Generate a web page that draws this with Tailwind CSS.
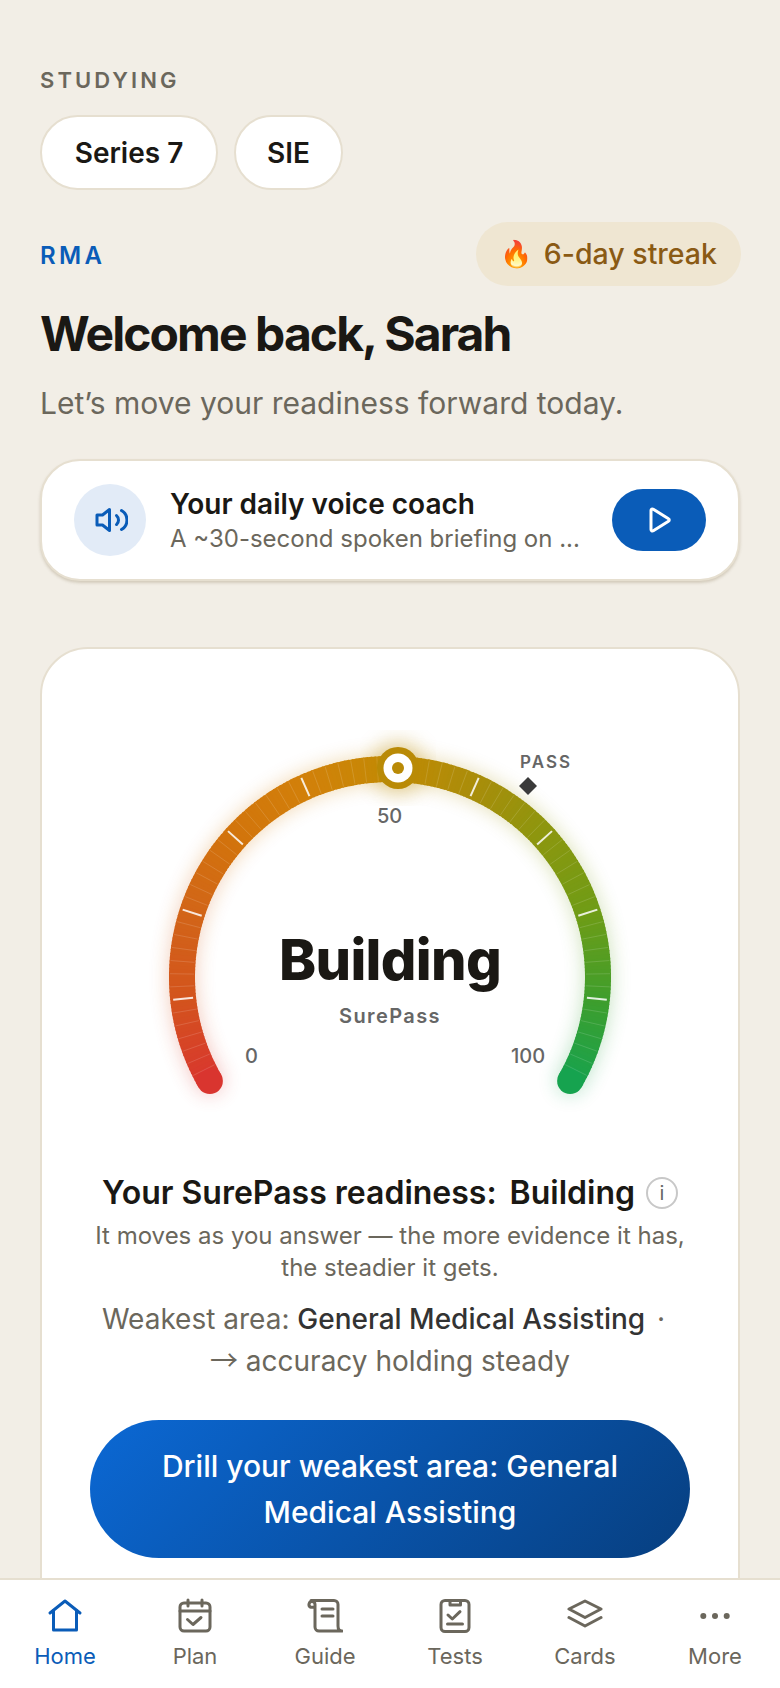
<!doctype html>
<html>
<head>
	<title>SurePass</title>
	<meta charset="UTF-8">
	<meta content="width=device-width, initial-scale=1.0" name="viewport">
	<script src="https://cdn.jsdelivr.net/npm/@tailwindcss/browser@4"></script>
</head>

<body class="bg-[#f2eee6]">

<div class="flex flex-col w-[780px] h-[1688px] overflow-hidden font-[Inter,sans-serif]">

	<main class="flex-1 min-h-0 overflow-hidden px-10">

		<!-- Studying -->
		<p class="pt-[68px] text-[22px] leading-6 font-semibold tracking-[0.14em] text-[#6b675c]">STUDYING</p>
		<div class="flex gap-[16px] mt-[23px]">
			<span class="flex items-center justify-center w-[178px] h-[75px] rounded-full border-2 border-[#e6dfd0] bg-white text-[28px] font-semibold text-[#1a1814]">Series 7</span>
			<span class="flex items-center justify-center w-[109px] h-[75px] rounded-full border-2 border-[#e6dfd0] bg-white text-[28px] font-semibold text-[#1a1814]">SIE</span>
		</div>

		<!-- Header -->
		<div class="flex items-center justify-between mt-[32px]">
			<span class="pt-[4px] text-[24px] font-semibold tracking-[0.14em] text-[#0a5cb8]">RMA</span>
			<span class="flex items-center gap-[11px] h-[64px] pl-[24px] pr-[24px] -mr-px rounded-full bg-[#efe6d2] text-[28.5px] font-medium text-[#8a5a14]">
				<span class="text-[26px] font-['Noto_Color_Emoji']">🔥</span>6-day streak
			</span>
		</div>
		<h1 class="mt-[20px] text-[48px] leading-[56px] font-bold tracking-[-0.04em] text-[#1a1814]">Welcome back, Sarah</h1>
		<p class="mt-[21px] text-[30px] leading-10 text-[#6b675c]">Let’s move your readiness forward today.</p>

		<!-- Voice coach -->
		<div class="flex items-center h-[122px] mt-[36px] px-[32px] rounded-[40px] border-2 border-[#e6dfd0] bg-white shadow-[0_2px_3px_rgba(120,100,60,0.25)]">
			<div class="flex items-center justify-center shrink-0 w-[72px] h-[72px] rounded-full bg-[#e2ebf7]">
				<svg width="36" height="36" viewBox="0 0 36 36" fill="none" stroke="#0a5cb8" stroke-width="3" stroke-linecap="round" stroke-linejoin="round">
					<path d="M17.5 7.5 L10.5 13 H5 V23 H10.5 L17.5 28.5 Z"/>
					<path d="M24.5 13.5 a6 6 0 0 1 0 9"/>
					<path d="M29.5 8.5 a11 11 0 0 1 0 19"/>
				</svg>
			</div>
			<div class="flex-1 min-w-0 ml-[24px]">
				<p class="text-[28px] leading-[36px] font-semibold text-[#1a1814]">Your daily voice coach</p>
				<p class="mt-[1px] whitespace-nowrap text-[24px] leading-[32px] text-[#6b675c]">A ~30-second spoken briefing on ...</p>
			</div>
			<button class="flex items-center justify-center shrink-0 w-[94px] h-[62px] rounded-full bg-[#0a5cb8]">
				<svg width="36" height="36" viewBox="0 0 36 36" fill="none" stroke="#fff" stroke-width="3" stroke-linejoin="round">
					<path d="M10 8.5 a1.5 1.5 0 0 1 2.3 -1.3 L27.5 16.7 a1.5 1.5 0 0 1 0 2.6 L12.3 28.8 a1.5 1.5 0 0 1 -2.3 -1.3 Z"/>
				</svg>
			</button>
		</div>

		<!-- Readiness card -->
		<section class="mt-[66px] h-[1100px] px-[48px] rounded-[48px] border-2 border-[#e6dfd0] bg-white">
			<div class="relative w-[480px] h-[380px] mt-[71px] mx-auto">
				<svg id="gauge" class="absolute inset-0 overflow-visible" width="480" height="380" viewBox="0 0 480 380">
					<defs>
						<filter id="glow" x="-20%" y="-20%" width="140%" height="140%"><feGaussianBlur stdDeviation="10"/></filter>
					</defs>
					<g id="arc-glow" filter="url(#glow)" opacity="0.3"></g>
					<g id="arc"></g>
					<g id="ticks"></g>
					<path d="M378 57 l9 9 l-9 9 l-9 -9 Z" fill="#3a3a3a"/>
					<circle cx="248" cy="48" r="27" fill="#b98a06" opacity="0.35" filter="url(#glow)"/>
					<circle cx="248" cy="48" r="21" fill="#b98a06"/>
					<circle cx="248" cy="48" r="14.5" fill="#fff"/>
					<circle cx="248" cy="48" r="6" fill="#b98a06"/>
				</svg>
				<span class="absolute left-[370px] top-[32px] text-[17px] leading-5 font-semibold tracking-[0.12em] text-[#666]">PASS</span>
				<span class="absolute left-[227px] top-[84px] text-[20px] leading-6 font-medium text-[#666]">50</span>
				<span class="absolute left-[95px] top-[324px] text-[20px] leading-6 font-medium text-[#666]">0</span>
				<span class="absolute left-[361px] top-[324px] text-[20px] leading-6 font-medium text-[#666]">100</span>
				<span class="absolute inset-x-0 top-[200px] text-center text-[56px] leading-[80px] font-extrabold tracking-[-0.012em] text-[#1a1814]">Building</span>
				<span class="absolute inset-x-0 top-[284px] text-center text-[20px] leading-6 font-semibold tracking-[0.07em] text-[#666]">SurePass</span>
			</div>

			<div class="flex items-center justify-center gap-[11px] mt-[71px]">
				<p class="flex gap-[13px] text-[32px] leading-[44px] font-semibold text-[#1a1814]"><span>Your SurePass readiness:</span><span>Building</span></p>
				<span class="flex items-center justify-center w-[32px] h-[32px] rounded-full border-2 border-[#c8c8c8] text-[20px] text-[#666]">i</span>
			</div>
			<p class="mt-[5px] text-center text-[24px] leading-[32px] text-[#6b675c]">It moves as you answer — the more evidence it has,<br>the steadier it gets.</p>
			<p class="mt-[15px] text-center text-[28px] leading-[40px] text-[#6b675c]"><span class="pr-[13px]">Weakest area: <span class="font-medium text-[#333]">General Medical Assisting</span> <span class="ml-[4px]">·</span></span><br><span class="font-['Noto_Sans_CJK_JP']">→</span> accuracy holding steady</p>

			<button class="block w-[600px] h-[138px] mt-[39px] mx-auto px-[50px] rounded-full bg-[linear-gradient(135deg,#0b68d4,#073f80)] text-[30px] leading-[46px] font-medium text-white">Drill your weakest area: General Medical Assisting</button>
		</section>
	</main>

	<!-- Bottom nav -->
	<nav class="grid grid-cols-6 shrink-0 h-[110px] pt-[18px] border-t-2 border-[#e6dfd0] bg-white text-[22px] leading-7 text-[#6b675c]">
		<a class="flex flex-col items-center gap-[8px] text-[#0a5cb8]">
			<svg width="36" height="36" viewBox="0 0 36 36" fill="none" stroke="currentColor" stroke-width="3" stroke-linecap="round" stroke-linejoin="round">
				<path d="M3 15 L18 3 L33 15"/><path d="M6.5 12.5 V32 H29.5 V12.5"/>
			</svg>
			<span>Home</span>
		</a>
		<a class="flex flex-col items-center gap-[8px]">
			<svg width="36" height="36" viewBox="0 0 36 36" fill="none" stroke="currentColor" stroke-width="3" stroke-linecap="round" stroke-linejoin="round">
				<rect x="3" y="5" width="30" height="28" rx="4"/><path d="M3 13 H33"/><path d="M11 2 V8"/><path d="M25 2 V8"/><path d="M10.5 21.5 L16 26.5 L24 19.5"/>
			</svg>
			<span>Plan</span>
		</a>
		<a class="flex flex-col items-center gap-[8px]">
			<svg width="36" height="36" viewBox="0 0 36 36" fill="none" stroke="currentColor" stroke-width="3" stroke-linecap="round" stroke-linejoin="round">
				<path d="M4 2.5 H27 a4 4 0 0 1 4 4 V28 c0 3 1.5 5 4 5 H12 a4 4 0 0 1 -4 -4 V6.5 a3 3 0 1 0 -4 2.8 H8"/><path d="M15 11 H26"/><path d="M15 18 H26"/>
			</svg>
			<span>Guide</span>
		</a>
		<a class="flex flex-col items-center gap-[8px]">
			<svg width="36" height="36" viewBox="0 0 36 36" fill="none" stroke="currentColor" stroke-width="3" stroke-linecap="round" stroke-linejoin="round">
				<rect x="4" y="2.5" width="28" height="31" rx="4"/><path d="M13 3 V7 H23.5 V3"/><path d="M11 17 L15.3 21 L23 13.7"/><path d="M10.5 26 H25.5"/>
			</svg>
			<span>Tests</span>
		</a>
		<a class="flex flex-col items-center gap-[8px]">
			<svg width="36" height="36" viewBox="0 0 36 36" fill="none" stroke="currentColor" stroke-width="3" stroke-linecap="round" stroke-linejoin="round">
				<path d="M18 3 L34 11 L18 19.5 L2 11 Z"/><path d="M2 19.5 L18 28 L34 19.5"/>
			</svg>
			<span>Cards</span>
		</a>
		<a class="flex flex-col items-center gap-[8px]">
			<svg width="36" height="36" viewBox="0 0 36 36" fill="currentColor">
				<circle cx="6.3" cy="18" r="3"/><circle cx="18" cy="18" r="3"/><circle cx="29.7" cy="18" r="3"/>
			</svg>
			<span>More</span>
		</a>
	</nav>
</div>

<script>
	// Gauge: 240 degree sweep, one short arc per step so the colour follows the curve
	const cx = 240, cy = 257, r = 208;
	const stops = [
		[0, '#d9352f'], [0.1, '#d3541d'], [0.2, '#d26518'], [0.3, '#d2740c'], [0.4, '#d2800a'],
		[0.5, '#c48a05'], [0.6, '#a98d0a'], [0.7, '#8b970f'], [0.8, '#6f9c16'], [0.9, '#3f9e2c'], [1, '#16a34f']
	];
	const NS = 'http://www.w3.org/2000/svg';

	function hex(c) {
		return [1, 3, 5].map(i => parseInt(c.slice(i, i + 2), 16));
	}

	function colorAt(t) {
		let i = 0;
		while (i < stops.length - 2 && t > stops[i + 1][0]) i++;
		const k = (t - stops[i][0]) / (stops[i + 1][0] - stops[i][0]);
		const a = hex(stops[i][1]), b = hex(stops[i + 1][1]);
		return `rgb(${a.map((v, j) => Math.round(v + (b[j] - v) * k)).join(',')})`;
	}

	function point(t, radius) {
		const a = (210 - 240 * t) * Math.PI / 180;
		return [cx + radius * Math.cos(a), cy - radius * Math.sin(a)];
	}

	function add(parent, tag, attrs) {
		const el = document.createElementNS(NS, tag);
		for (const k in attrs) el.setAttribute(k, attrs[k]);
		parent.appendChild(el);
	}

	const arc = document.getElementById('arc');
	const glow = document.getElementById('arc-glow');
	const steps = 240;
	for (let i = 0; i < steps; i++) {
		const p = point(i / steps, r), q = point(Math.min(1, (i + 1.3) / steps), r);
		const attrs = {
			d: `M${p[0]} ${p[1]} A${r} ${r} 0 0 1 ${q[0]} ${q[1]}`,
			fill: 'none', stroke: colorAt((i + 0.5) / steps), 'stroke-width': 26
		};
		add(arc, 'path', attrs);
		add(glow, 'path', attrs);
	}
	[0, 1].forEach(t => {
		const p = point(t, r);
		add(arc, 'circle', {cx: p[0], cy: p[1], r: 13, fill: colorAt(t)});
		add(glow, 'circle', {cx: p[0], cy: p[1], r: 13, fill: colorAt(t)});
	});

	const ticks = document.getElementById('ticks');
	for (let i = 1; i < 70; i++) {
		if (i % 7 === 0) continue;
		const t = i / 70, p = point(t, 196), q = point(t, 220);
		add(ticks, 'line', {x1: p[0], y1: p[1], x2: q[0], y2: q[1], stroke: '#fff', 'stroke-opacity': 0.14, 'stroke-width': 1});
	}
	for (let i = 1; i < 10; i++) {
		if (i === 5) continue;
		const t = i / 10, p = point(t, 198), q = point(t, 218);
		add(ticks, 'line', {x1: p[0], y1: p[1], x2: q[0], y2: q[1], stroke: '#fff', 'stroke-opacity': 0.85, 'stroke-width': 2});
	}
</script>

</body>
</html>
